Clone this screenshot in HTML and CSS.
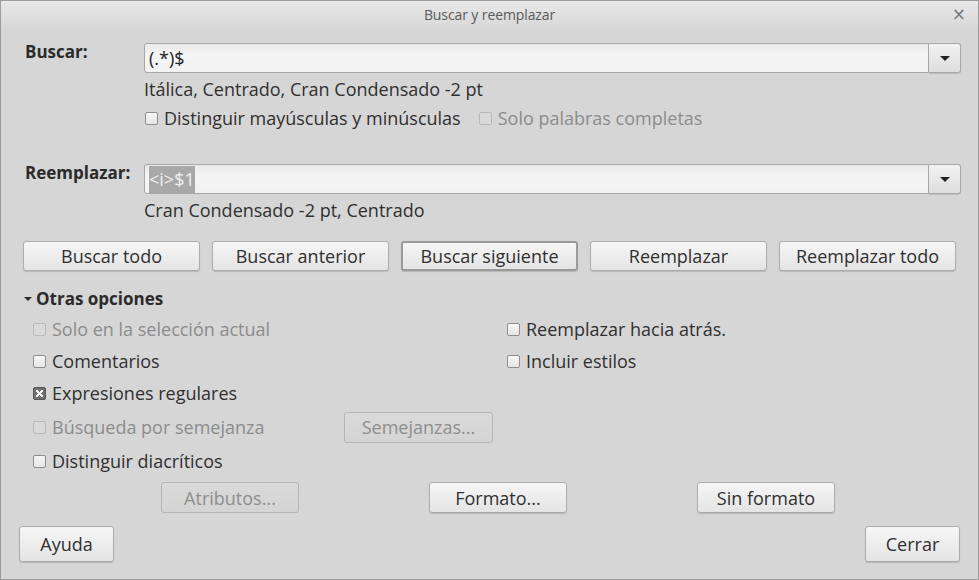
FILE: index.html
```html
<!DOCTYPE html>
<html lang="es">
<head>
<meta charset="utf-8">
<title>Buscar y reemplazar</title>
<link rel="stylesheet" href="styles.css">
</head>
<body>
<div class="window">
  <div class="titlebar">
    <span class="title">Buscar y reemplazar</span>
    <span class="close">×</span>
  </div>
  <div class="content">
    <div class="field-row">
      <div class="label">Buscar:</div>
      <div class="field">
        <div class="combo">
          <div class="combo-input">(.*)$</div>
          <div class="combo-btn"><span class="arrow"></span></div>
        </div>
        <div class="attrs">Itálica, Centrado, Cran Condensado -2 pt</div>
        <div class="check-line">
          <label class="check"><span class="box"></span>Distinguir mayúsculas y minúsculas</label>
          <label class="check disabled"><span class="box"></span>Solo palabras completas</label>
        </div>
      </div>
    </div>
    <div class="field-row replace">
      <div class="label">Reemplazar:</div>
      <div class="field">
        <div class="combo">
          <div class="combo-input"><span class="sel">&lt;i&gt;$1</span></div>
          <div class="combo-btn"><span class="arrow"></span></div>
        </div>
        <div class="attrs">Cran Condensado -2 pt, Centrado</div>
      </div>
    </div>
    <div class="actions">
      <button class="btn">Buscar todo</button>
      <button class="btn">Buscar anterior</button>
      <button class="btn default">Buscar siguiente</button>
      <button class="btn">Reemplazar</button>
      <button class="btn">Reemplazar todo</button>
    </div>
    <div class="expander"><span class="tri"></span>Otras opciones</div>
    <div class="options">
      <div class="opt-row">
        <label class="check disabled"><span class="box"></span>Solo en la selección actual</label>
        <label class="check"><span class="box"></span>Reemplazar hacia atrás.</label>
      </div>
      <div class="opt-row">
        <label class="check"><span class="box"></span>Comentarios</label>
        <label class="check"><span class="box"></span>Incluir estilos</label>
      </div>
      <div class="opt-row">
        <label class="check"><span class="box checked"></span>Expresiones regulares</label>
      </div>
      <div class="opt-row similar">
        <label class="check disabled"><span class="box"></span>Búsqueda por semejanza</label>
        <button class="btn small disabled-btn">Semejanzas...</button>
      </div>
      <div class="opt-row">
        <label class="check"><span class="box"></span>Distinguir diacríticos</label>
      </div>
    </div>
    <div class="format-row">
      <button class="btn fmt disabled-btn">Atributos...</button>
      <button class="btn fmt">Formato...</button>
      <button class="btn fmt">Sin formato</button>
    </div>
    <div class="bottom-row">
      <button class="btn bottom">Ayuda</button>
      <button class="btn bottom">Cerrar</button>
    </div>
  </div>
</div>
</body>
</html>
```

FILE: styles.css
```css
* { box-sizing: border-box; }
html, body { margin: 0; padding: 0; }
body {
  width: 979px;
  height: 580px;
  overflow: hidden;
  font-family: "Open Sans", Lato, sans-serif;
  font-size: 18px;
  line-height: 22px;
  color: #303030;
  background: #d6d6d6;
}
.window {
  width: 979px;
  height: 580px;
  border: 1px solid #9c9c9c;
  background: #d6d6d6;
  display: flex;
  flex-direction: column;
}
.titlebar {
  height: 27px;
  flex: none;
  display: flex;
  align-items: center;
  justify-content: center;
  background: linear-gradient(#e8e8e8, #d8d8d8);
  position: relative;
}
.title {
  font-family: "Open Sans", sans-serif;
  font-size: 14px;
  line-height: 18px;
  color: #5a5a5a;
  letter-spacing: -0.1px;
}
.close {
  position: absolute;
  right: 12px;
  top: 3px;
  font-size: 17px;
  line-height: 20px;
  color: #777;
  font-family: "DejaVu Sans", sans-serif;
}
.content {
  flex: 1;
  padding: 15px 18px 0 18px;
  display: flex;
  flex-direction: column;
}
.field-row {
  display: flex;
  padding-left: 6px;
}
.field-row.replace { margin-top: 35px; }
.label {
  width: 119px;
  flex: none;
  font-weight: 700;
  font-size: 17px;
  margin-top: -2px;
  color: #2b2b2b;
}
.field { flex: 1; }
.combo {
  display: flex;
  height: 30px;
  width: 817px;
}
.combo-input {
  flex: 1;
  border: 1px solid #a8a8a8;
  border-radius: 3px 0 0 3px;
  background: linear-gradient(#e9e9e9, #f5f5f5 40%, #f2f2f2);
  line-height: 26px;
  padding: 1px 0 0 4px;
  color: #222;
}
.sel {
  background: #a8a8a8;
  color: #f0f0f0;
  padding: 1px 0 2px;
}
.combo-btn {
  width: 32px;
  flex: none;
  border: 1px solid #a8a8a8;
  border-left: none;
  border-radius: 0 3px 3px 0;
  background: linear-gradient(#f2f2f2, #dedede);
  display: flex;
  align-items: center;
  justify-content: center;
  box-shadow: 0 1px 1px rgba(0,0,0,0.12);
}
.arrow {
  width: 0;
  height: 0;
  border-left: 5px solid transparent;
  border-right: 5px solid transparent;
  border-top: 5px solid #222;
}
.attrs {
  margin-top: 5px;
  height: 22px;
}
.check-line {
  display: flex;
  margin-top: 7px;
  gap: 17px;
}
.check {
  display: flex;
  align-items: center;
  height: 22px;
  white-space: nowrap;
}
.check.disabled { color: #8c8c8c; }
.box {
  width: 13px;
  height: 13px;
  border: 1px solid #8e8e8e;
  border-radius: 2px;
  background: linear-gradient(#f6f6f6, #e6e6e6);
  margin: 1px 6px 0 1px;
  flex: none;
  position: relative;
}
.check.disabled .box {
  border-color: #b8b8b8;
  background: #d9d9d9;
}
.box.checked {
  background: #707070;
  border-color: #555;
}
.box.checked::after {
  content: "";
  position: absolute;
  left: 2px; top: 2px;
  width: 7px; height: 7px;
  background:
    linear-gradient(45deg, transparent 38%, #f2f2f2 38%, #f2f2f2 62%, transparent 62%),
    linear-gradient(-45deg, transparent 38%, #f2f2f2 38%, #f2f2f2 62%, transparent 62%);
}
.actions {
  display: flex;
  gap: 12px;
  margin-top: 20px;
  padding-left: 4px;
}
.btn {
  font-family: "Open Sans", Lato, sans-serif;
  font-size: 18px;
  line-height: 22px;
  color: #303030;
  background: linear-gradient(#f6f6f6, #e4e4e4);
  border: 1px solid #acacac;
  border-radius: 3px;
  box-shadow: 0 1px 1px rgba(0,0,0,0.15);
  height: 30px;
  padding: 0;
}
.actions .btn { width: 177px; }
.btn.default {
  border: 2px solid #9a9a9a;
}
.btn.disabled-btn {
  color: #8e8e8e;
  background: linear-gradient(#dadada, #d4d4d4);
  border-color: #b4b4b4;
  box-shadow: none;
}
.expander {
  margin-top: 17px;
  padding-left: 5px;
  font-weight: 700;
  font-size: 17px;
  display: flex;
  align-items: center;
  height: 22px;
  color: #2b2b2b;
}
.tri {
  width: 0; height: 0;
  border-left: 4px solid transparent;
  border-right: 4px solid transparent;
  border-top: 4px solid #2b2b2b;
  margin-right: 4px;
}
.options {
  margin-top: 3px;
  padding-left: 13px;
  display: flex;
  flex-direction: column;
}
.opt-row {
  display: flex;
  align-items: center;
  height: 32px;
}
.opt-row .check:first-child { width: 474px; }
.opt-row.similar { height: 36px; }
.opt-row.similar .check:first-child { width: 312px; }
.btn.small { width: 149px; height: 31px; }
.format-row {
  display: flex;
  margin-top: 5px;
  padding-left: 142px;
  gap: 130px;
}
.btn.fmt { width: 138px; height: 31px; }
.bottom-row {
  display: flex;
  justify-content: space-between;
  margin-top: 13px;
}
.btn.bottom { width: 95px; height: 36px; }
```
